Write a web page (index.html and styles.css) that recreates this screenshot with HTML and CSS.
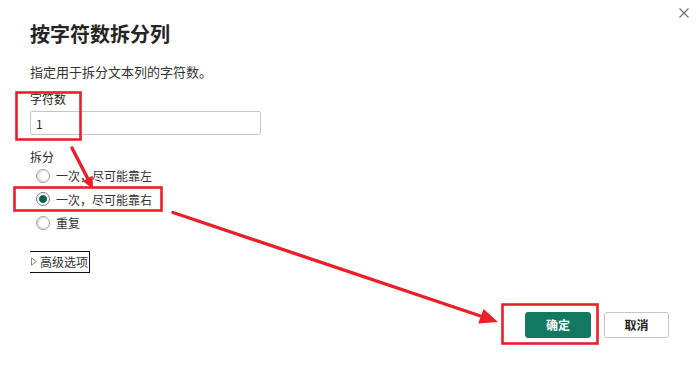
FILE: index.html
```html
<!DOCTYPE html>
<html lang="zh-CN">
<head>
    <meta charset="UTF-8">
    <meta name="viewport" content="width=device-width, initial-scale=1.0">
    <title>按字符数拆分列</title>
    <link rel="stylesheet" href="styles.css">
</head>
<body>
    <div class="dialog">
        <div class="dialog-head">
            <h1>按字符数拆分列</h1>
            <button class="close" type="button" aria-label="关闭">
                <svg width="10" height="10" viewBox="0 0 10 10">
                    <path d="M0.5 0.5 L9.5 9.5 M9.5 0.5 L0.5 9.5" stroke="#6b6b6b" stroke-width="1.1" fill="none"/>
                </svg>
            </button>
        </div>

        <p class="desc">指定用于拆分文本列的字符数。</p>

        <label class="field-label" for="char_count">字符数</label>
        <input class="text-input" id="char_count" type="text" value="1">

        <div class="group-label">拆分</div>
        <div class="radio-list">
            <label class="radio-row"><span class="radio"></span>一次，尽可能靠左</label>
            <label class="radio-row"><span class="radio checked"></span>一次，尽可能靠右</label>
            <label class="radio-row"><span class="radio"></span>重复</label>
        </div>

        <div class="advanced">
            <svg class="caret" width="6" height="9" viewBox="0 0 6 9">
                <path d="M0.5 0.8 L5.2 4.5 L0.5 8.2 Z" fill="none" stroke="#8a8886" stroke-width="1"/>
            </svg>
            高级选项
        </div>

        <div class="actions">
            <button class="btn primary" type="button">确定</button>
            <button class="btn" type="button">取消</button>
        </div>
    </div>

    <!-- annotation marks drawn over the dialog -->
    <svg class="marks" width="700" height="370" viewBox="0 0 700 370">
        <g fill="none" stroke="#e8202a" stroke-width="2.6">
            <rect x="16.5" y="92.5" width="64" height="47"/>
            <rect x="14.5" y="187.5" width="147" height="23"/>
            <rect x="502.5" y="304.5" width="95" height="39"/>
        </g>
        <g stroke="#e8202a" stroke-width="3.4" stroke-linecap="round">
            <line x1="72" y1="148" x2="88" y2="179"/>
            <line x1="173" y1="212.5" x2="482" y2="316.5"/>
        </g>
        <g fill="#e8202a">
            <polygon points="93,189 82.6,181 92.6,175.8"/>
            <polygon points="498,322 478.2,323.4 483.6,309"/>
        </g>
    </svg>
</body>
</html>
```

FILE: styles.css
```css
body {
    margin: 0;
    width: 700px;
    height: 370px;
    overflow: hidden;
    background-color: #fff;
    color: #252423;
    font-family: "Noto Sans CJK SC", "Noto Sans", sans-serif;
    position: relative;
}

.dialog {
    padding: 0 31px 0 30px;
    display: flex;
    flex-direction: column;
    align-items: flex-start;
}

.dialog-head {
    align-self: stretch;
    display: flex;
    justify-content: space-between;
    align-items: flex-start;
    margin-right: -20px;
}

h1 {
    margin: 20px 0 0;
    font-size: 20px;
    line-height: 28px;
    font-weight: bold;
    color: #252423;
}

.close {
    margin-top: 8px;
    padding: 0;
    border: none;
    background: none;
    width: 10px;
    height: 10px;
    display: block;
}

.close svg {
    display: block;
}

.desc {
    margin: 15px 0 0;
    font-size: 13px;
    line-height: 18px;
    color: #333;
}

.field-label {
    margin-top: 10px;
    font-size: 12px;
    line-height: 16px;
}

.text-input {
    margin-top: 4px;
    width: 231px;
    height: 24px;
    box-sizing: border-box;
    border: 1px solid #c8c6c4;
    border-radius: 2px;
    padding: 0 5px;
    font-family: "Noto Sans CJK SC", sans-serif;
    font-size: 12px;
    color: #252423;
    outline: none;
}

.group-label {
    margin-top: 15px;
    font-size: 12px;
    line-height: 14px;
}

.radio-list {
    display: flex;
    flex-direction: column;
}

.radio-row {
    display: flex;
    align-items: center;
    height: 23.5px;
    padding-left: 6px;
    gap: 6px;
    font-size: 12px;
    color: #333;
}

.radio {
    width: 14px;
    height: 14px;
    box-sizing: border-box;
    border: 1px solid #a19f9d;
    border-radius: 50%;
    background-color: #fff;
    box-shadow: inset 1px 0 0 1px #e1dfdd;
}

.radio.checked {
    border-color: #7a7a7a;
    box-shadow: none;
    background: radial-gradient(circle, #0f5e4c 0, #0f5e4c 3px, #1f7a64 3.6px, #fff 4.4px);
}

.advanced {
    margin-top: 16px;
    height: 22px;
    display: flex;
    align-items: center;
    gap: 3px;
    padding: 0 1px 0 1px;
    border: 1px solid #111;
    border-left: none;
    box-sizing: border-box;
    font-size: 12px;
    color: #333;
}

.caret {
    display: block;
}

.actions {
    align-self: stretch;
    margin-top: 39px;
    display: flex;
    justify-content: flex-end;
    gap: 13px;
}

.btn {
    width: 65px;
    height: 26px;
    box-sizing: border-box;
    border: 1px solid #c8c6c4;
    border-radius: 3px;
    background-color: #fff;
    color: #252423;
    font-family: "Noto Sans CJK SC", sans-serif;
    font-size: 12px;
    font-weight: bold;
    padding: 0;
}

.btn.primary {
    width: 66px;
    border-color: #137862;
    background-color: #137862;
    color: #fff;
}

.marks {
    position: absolute;
    left: 0;
    top: 0;
    pointer-events: none;
}
```
